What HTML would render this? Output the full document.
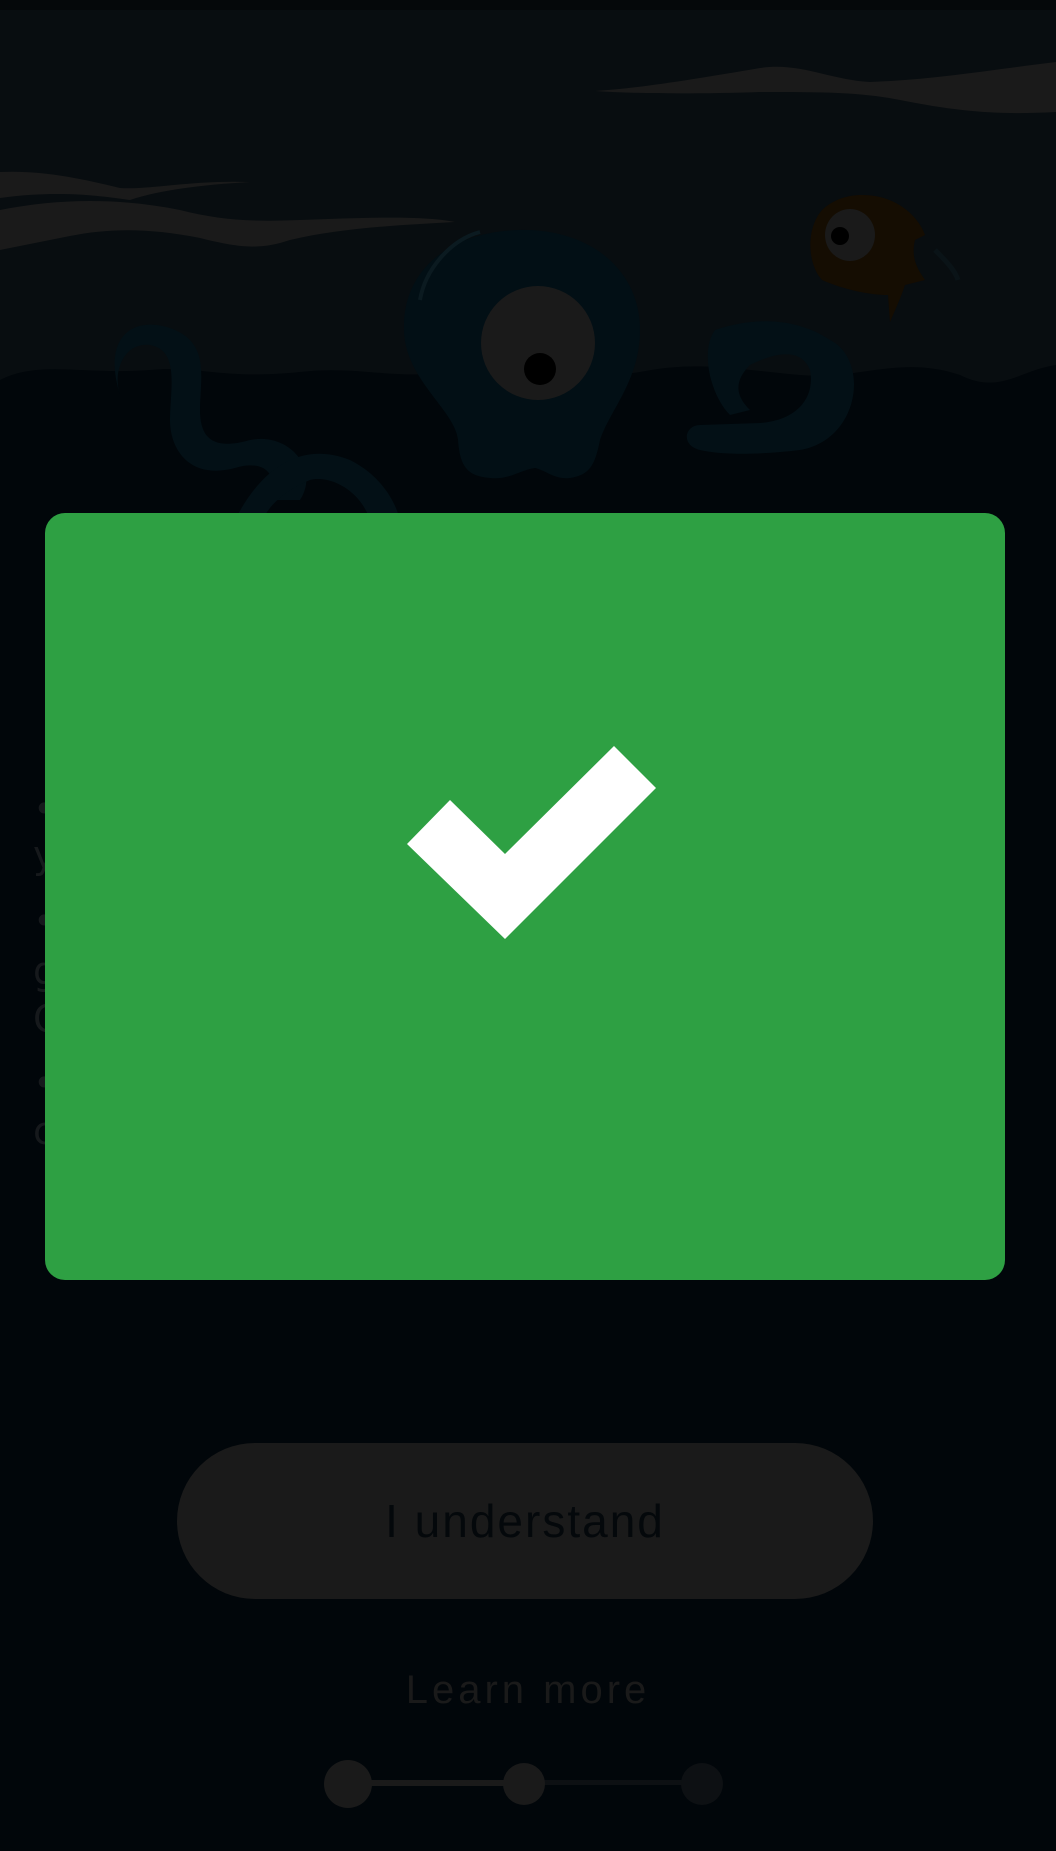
<!DOCTYPE html>
<html><head><meta charset="utf-8"><style>
html,body{margin:0;padding:0;}
body{width:1056px;height:1851px;background:#01060a;position:relative;overflow:hidden;font-family:"Liberation Sans",sans-serif;}
.abs{position:absolute;}
.ft{position:absolute;left:33px;color:#16191c;font-size:38px;font-family:"DejaVu Sans","Liberation Sans",sans-serif;line-height:1;}
</style></head><body>
<svg class="abs" style="left:0;top:0" width="1056" height="620" viewBox="0 0 1056 620">
<rect x="0" y="0" width="1056" height="620" fill="#01060a"/>
<rect x="0" y="0" width="1056" height="10" fill="#05080a"/>
<path d="M0 10 H1056 V365 C1020 370 1000 395 960 375 C900 355 860 380 800 375 C740 370 700 360 640 372 C560 385 520 360 460 370 C400 382 360 365 300 372 C220 380 200 365 150 370 C80 375 40 360 0 380 Z" fill="#080d10"/>
<path d="M595 91 C640 88 690 80 760 68 C800 62 830 80 870 82 C930 80 990 70 1056 62 V112 C1000 115 960 112 900 100 C860 92 820 92 760 92 C700 94 640 94 595 91 Z" fill="#1a1a1a"/>
<path d="M0 172 C40 170 80 178 120 188 C150 190 190 180 250 182 C200 185 160 190 130 200 C100 196 60 190 0 198 Z" fill="#1a1a1a"/>
<path d="M0 210 C60 198 120 198 180 210 C220 220 250 222 300 220 C360 218 420 215 455 222 C400 225 340 228 290 240 C260 250 240 248 200 238 C150 228 110 228 70 236 L0 250 Z" fill="#1a1a1a"/>
<path d="M120 395 C100 330 140 315 175 330 C210 345 200 380 200 410 C200 440 215 450 250 440 C290 432 320 470 300 500 L270 500 C280 470 260 460 235 468 C190 480 170 450 170 420 C170 390 180 350 150 345 C125 342 112 370 120 395 Z" fill="#031016"/>
<path d="M235 520 C260 470 300 440 350 460 C380 475 395 500 400 520 L370 520 C360 490 330 475 310 480 C285 490 270 505 262 520 Z" fill="#031016"/>
<path d="M715 330 C760 315 800 320 830 340 C870 360 860 440 800 450 C760 455 720 455 700 450 C680 445 685 425 700 425 L760 423 C800 420 815 395 810 370 C800 345 770 355 750 365 C730 385 740 400 750 410 L730 415 C710 395 700 350 715 330 Z" fill="#031016"/>
<path d="M518 230 C590 228 640 270 640 330 C640 380 610 410 600 440 C595 465 590 475 570 478 C555 480 545 470 535 468 C520 470 510 480 490 478 C470 476 460 470 458 440 C455 410 405 380 404 330 C402 270 450 232 518 230 Z" fill="#020f15"/>
<path d="M420 300 C425 270 450 240 480 232" stroke="#0b1a20" stroke-width="4" fill="none"/>
<ellipse cx="538" cy="343" rx="57" ry="57" fill="#1a1a1a"/>
<circle cx="540" cy="369" r="16" fill="#000"/>
<path d="M862 195 C900 195 920 220 925 235 L915 240 C910 260 920 272 925 280 L905 285 C900 300 895 310 890 322 L888 295 C870 295 845 290 822 280 C808 265 805 230 822 210 C835 198 850 195 862 195 Z" fill="#150d02"/>
<ellipse cx="850" cy="235" rx="25" ry="26" fill="#1a1a1a"/>
<circle cx="840" cy="236" r="9" fill="#000"/>
<path d="M935 250 C945 260 955 270 958 280" stroke="#0a1317" stroke-width="5" fill="none"/>
</svg>

<div class="ft" style="top:790px">•</div>
<div class="ft" style="top:836px">y</div>
<div class="ft" style="top:902px">•</div>
<div class="ft" style="top:952px">g</div>
<div class="ft" style="top:1000px">C</div>
<div class="ft" style="top:1064px">•</div>
<div class="ft" style="top:1112px">c</div>

<div class="abs" style="left:45px;top:513px;width:960px;height:767px;background:#2ea043;border-radius:20px;"></div>
<svg class="abs" style="left:0;top:0" width="1056" height="1851">
<polygon points="407,844 450,800 505,854 614,746 656,788 505,939" fill="#fff"/>
</svg>

<div class="abs" style="left:177px;top:1443px;width:696px;height:156px;border-radius:78px;background:#1a1a1a;color:#04080b;font-family:'Liberation Sans',sans-serif;font-size:46px;letter-spacing:2px;display:flex;align-items:center;justify-content:center;">I understand</div>
<div class="abs" style="left:0;width:1056px;top:1668px;text-align:center;color:#1a1a1a;font-family:'Liberation Sans',sans-serif;font-size:40px;letter-spacing:4px;">Learn more</div>

<svg class="abs" style="left:0;top:1750px" width="1056" height="70">
<rect x="348" y="30" width="176" height="6" fill="#1a1a1a"/>
<rect x="524" y="30" width="178" height="5" fill="#0d1013"/>
<circle cx="348" cy="34" r="24" fill="#1a1a1a"/>
<circle cx="524" cy="34" r="21" fill="#1a1a1a"/>
<circle cx="702" cy="34" r="21" fill="#0d1013"/>
</svg>
</body></html>
